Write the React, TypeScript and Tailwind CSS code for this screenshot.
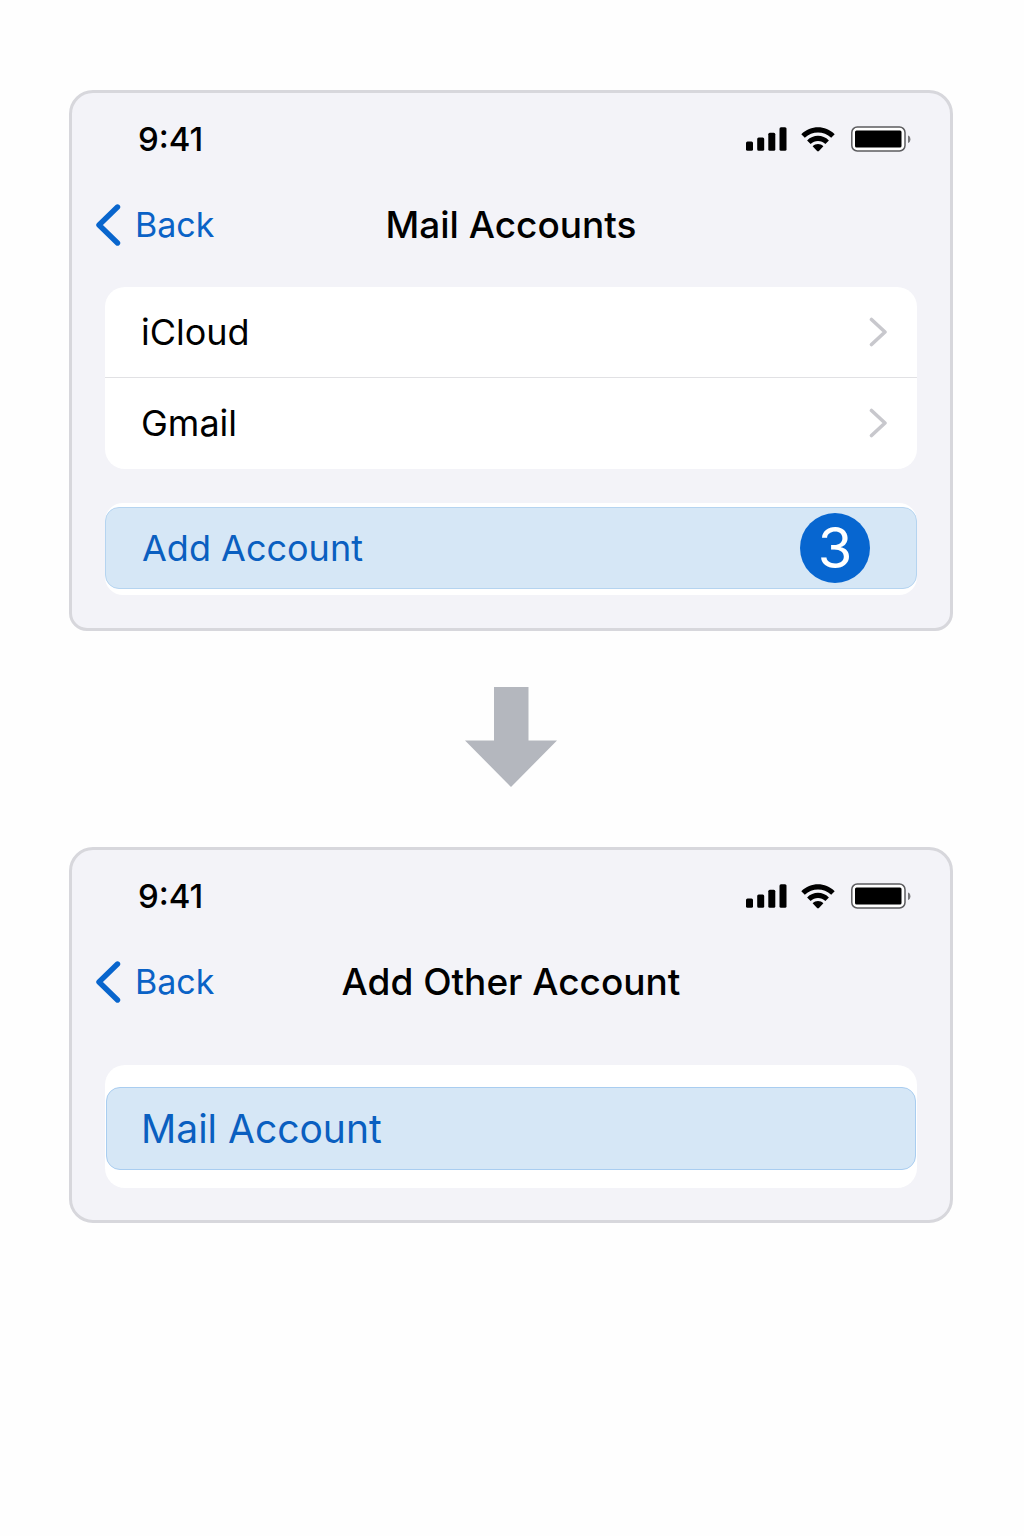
import type { ReactNode } from 'react';
import clsx from 'clsx';

const accounts = ['iCloud', 'Gmail'];

function SignalIcon() {
  return (
    <svg width="41" height="24" viewBox="0 0 41 24" aria-hidden="true">
      <rect x="0" y="14.5" width="7" height="9.2" rx="1.5" />
      <rect x="11.2" y="10.5" width="7" height="13.2" rx="1.5" />
      <rect x="22.3" y="5.8" width="7" height="17.9" rx="1.5" />
      <rect x="33.5" y="0.3" width="7" height="23.4" rx="1.5" />
    </svg>
  );
}

function WifiIcon() {
  return (
    <svg width="34" height="25" viewBox="0 0 34 25" aria-hidden="true">
      <path d="M0.3 7.2C9.7-2 24.3-2 33.7 7.2L30.2 10.8C22.8 3.7 11.2 3.7 3.8 10.8Z" />
      <path d="M6.1 13.4C12.3 7.2 21.7 7.2 27.9 13.4L24.4 17C20.3 13 13.7 13 9.6 17Z" />
      <path d="M11.6 19.2C14.6 16.4 19.4 16.4 22.4 19.2L17.9 24Q17 24.8 16.1 24Z" />
    </svg>
  );
}

function BatteryIcon() {
  return (
    <svg width="60" height="26" viewBox="0 0 60 26" aria-hidden="true">
      <rect x="0.8" y="1" width="53.2" height="24" rx="5.5" fill="#fff" stroke="#5c5c5f" strokeWidth="1.5" />
      <rect x="4" y="4.5" width="46.5" height="17" rx="1.5" />
      <path d="M57 9.5C60.2 10 60.2 16.5 57 17Z" fill="#77777a" />
    </svg>
  );
}

function StatusBar() {
  return (
    <div className="flex h-[92px] items-center justify-between pr-[39px] pl-[66px]">
      <span className="text-[33px] leading-10 font-medium">9:41</span>
      <div className="flex items-center">
        <SignalIcon />
        <span className="ml-3.5 flex">
          <WifiIcon />
        </span>
        <span className="ml-4 flex">
          <BatteryIcon />
        </span>
      </div>
    </div>
  );
}

function NavBar({ title }: { title: string }) {
  return (
    <div className="grid h-20 grid-cols-[1fr_auto_1fr] items-center px-[23px]">
      <button type="button" className="flex items-center gap-3.5 text-[34px] leading-10 text-[#0a62c6]">
        <svg width="26" height="42" viewBox="0 0 26 42" fill="none" aria-hidden="true">
          <path d="M22.5 3L4 21L22.5 39" stroke="#0865cd" strokeWidth="5.4" strokeLinecap="round" strokeLinejoin="round" />
        </svg>
        Back
      </button>
      <h1 className="text-[37px] leading-12 font-medium">{title}</h1>
    </div>
  );
}

function Chevron() {
  return (
    <svg width="20" height="30" viewBox="0 0 20 30" fill="none" aria-hidden="true">
      <path d="M3.5 2.5L17 15L3.5 27.5" stroke="#c8c8cd" strokeWidth="3.6" strokeLinecap="round" strokeLinejoin="round" />
    </svg>
  );
}

function Panel({ title, className, children }: { title: string; className?: string; children: ReactNode }) {
  return (
    <section className={clsx('border-3 border-[#d7d7dc] bg-[#f3f3f8]', className)}>
      <StatusBar />
      <NavBar title={title} />
      <div className="px-[33px]">{children}</div>
    </section>
  );
}

export default function App() {
  return (
    <main className="min-h-screen bg-[#fefefe] pt-[90px] pr-[71px] pb-12 pl-[69px] font-[Inter,sans-serif] text-black">
      <Panel title="Mail Accounts" className="rounded-t-3xl rounded-b-[18px] pb-[33px]">
        <ul className="mt-[22px] divide-y divide-[#e1e1e4] rounded-[20px] bg-white pb-px">
          {accounts.map((name) => (
            <li key={name}>
              <button
                type="button"
                className="flex h-[90px] w-full items-center justify-between pr-[29px] pl-9 text-[36px] leading-12"
              >
                {name}
                <Chevron />
              </button>
            </li>
          ))}
        </ul>

        <div className="mt-[34px] rounded-[18px] bg-white pt-1 pb-1.5">
          <button
            type="button"
            className="flex h-[82px] w-full items-center justify-between rounded-[14px] border border-[#b5d4f0] bg-[#d6e7f6] pr-[46px] pl-9 text-[36px] leading-12 text-[#0a5fc0]"
          >
            Add Account
            <span className="flex size-[70px] items-center justify-center rounded-full bg-[#0766d0] text-[56px] leading-none text-white">
              3
            </span>
          </button>
        </div>
      </Panel>

      <svg className="mx-auto mt-14 mb-[60px] block" width="92" height="100" viewBox="0 0 92 100" aria-hidden="true">
        <path d="M29 0H63.5V53.5H92L46 100L0 53.5H29Z" fill="#b4b7be" />
      </svg>

      <Panel title="Add Other Account" className="rounded-3xl pb-8">
        <div className="mt-[43px] rounded-[20px] bg-white px-px pt-[22px] pb-[18px]">
          <button
            type="button"
            className="flex h-[83px] w-full items-center rounded-[14px] border border-[#a9cdf0] bg-[#d6e7f6] pl-[34px] text-[39px] leading-12 text-[#0a5fc0]"
          >
            Mail Account
          </button>
        </div>
      </Panel>
    </main>
  );
}
